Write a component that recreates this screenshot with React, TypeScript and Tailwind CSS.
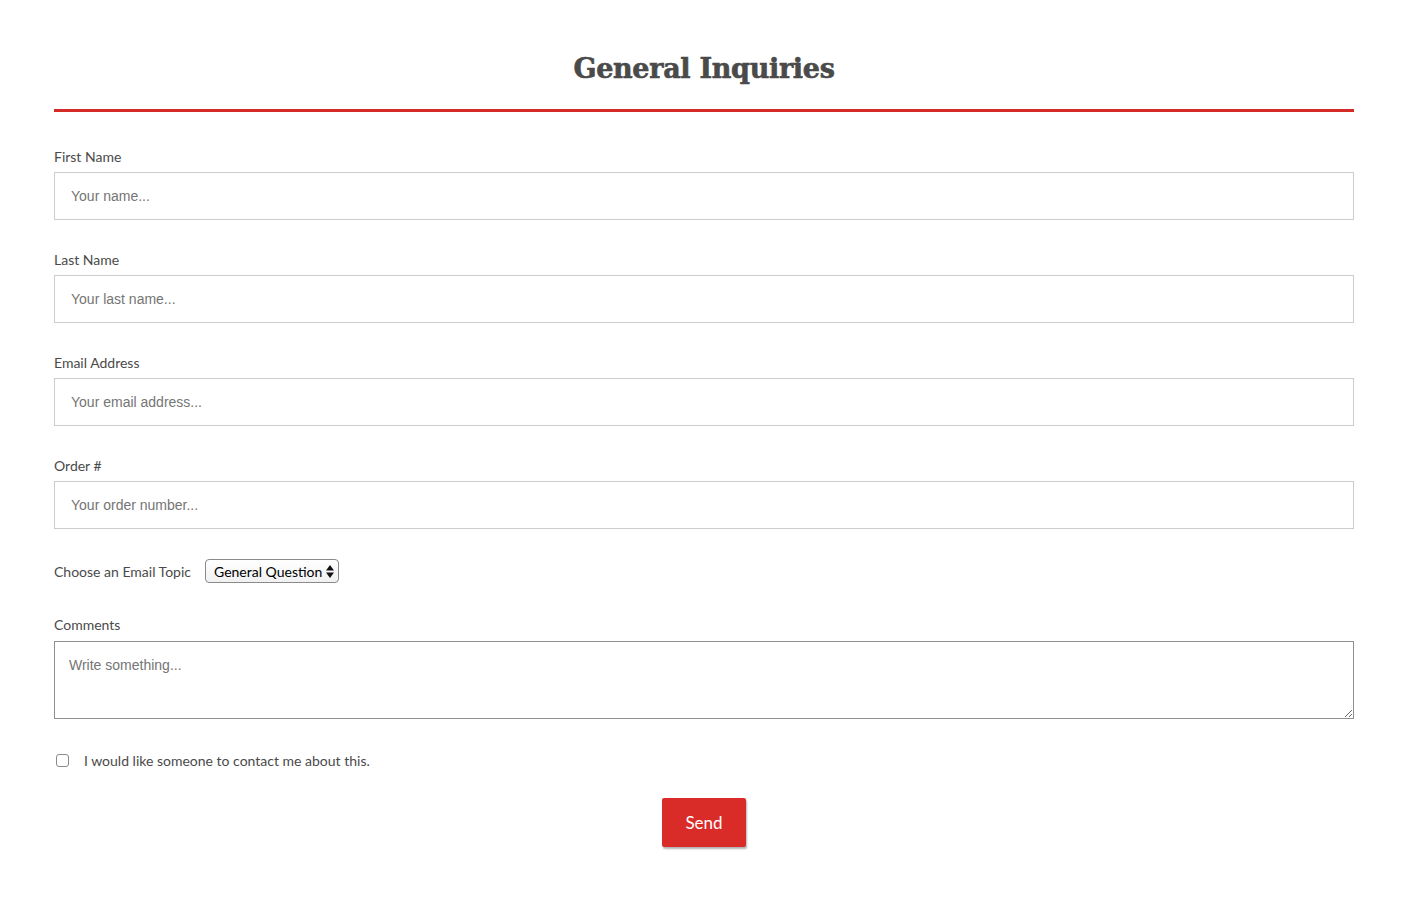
import React from "react";

const labelCls = "block h-5 leading-5 text-[14px] text-[#4a4a4a] mb-[5px]";
const inputCls =
  "block w-full h-12 border border-[#cccccc] bg-white px-4 text-[14px] text-[#333] placeholder:text-[#757575] outline-none mb-[30px]";

function Field({ label, placeholder }: { label: string; placeholder: string }) {
  return (
    <div>
      <label className={labelCls}>{label}</label>
      <input
        type="text"
        placeholder={placeholder}
        className={inputCls}
        style={{ fontFamily: '"Liberation Sans", Arial, sans-serif' }}
      />
    </div>
  );
}

export default function App() {
  return (
    <div
      className="min-h-[908px] bg-white px-[54px] pt-[50px]"
      style={{ fontFamily: 'Lato, "Open Sans", sans-serif' }}
    >
      <h1
        className="text-center text-[27px] font-bold leading-[38px] text-[#4a4a4a] tracking-[-0.3px] [-webkit-text-stroke:0.6px_#4a4a4a]"
        style={{ fontFamily: '"DejaVu Serif", "Liberation Serif", serif' }}
      >
        General Inquiries
      </h1>
      <div className="mt-[21px] h-[3px] bg-[#d52b27]" />

      <form className="pt-[35px]">
        <Field label="First Name" placeholder="Your name..." />
        <Field label="Last Name" placeholder="Your last name..." />
        <Field label="Email Address" placeholder="Your email address..." />
        <Field label="Order #" placeholder="Your order number..." />

        <div className="flex h-6 mt-px items-center gap-[14px] mb-[32px]">
          <span className="text-[14px] text-[#4a4a4a]">Choose an Email Topic</span>
          <div className="relative flex h-[24px] w-[134px] items-center rounded-[4px] border border-[#8a8a8a] bg-gradient-to-b from-white to-[#f1f1f1] pl-[8px] text-[14px] text-black">
            General Question
            <svg className="absolute right-[4px] top-[5px]" width="8" height="13" viewBox="0 0 8 13">
              <path d="M4 0 L8 5.5 H0 Z M0 7.5 H8 L4 13 Z" fill="#111" />
            </svg>
          </div>
        </div>

        <label className={labelCls + " mb-[6px]"}>Comments</label>
        <textarea
          placeholder="Write something..."
          className="block w-full h-[78px] border border-[#8f8f8f] bg-white px-[14px] pt-[13px] text-[14px] placeholder:text-[#757575] outline-none"
          style={{ fontFamily: '"Liberation Sans", Arial, sans-serif' }}
        />

        <div className="mt-[31px] flex items-center h-5">
          <span className="ml-[2px] h-[13px] w-[13px] rounded-[3px] border border-[#8a8a8a] bg-white" />
          <span className="ml-[15px] text-[14px] text-[#4a4a4a]">
            I would like someone to contact me about this.
          </span>
        </div>

        <div className="mt-[28px] flex justify-center">
          <button
            type="button"
            className="h-[49px] w-[84px] rounded-[2px] bg-[#d92b27] text-[17px] text-white shadow-[1px_2px_2px_rgba(0,0,0,0.3)]"
          >
            Send
          </button>
        </div>
      </form>
    </div>
  );
}
